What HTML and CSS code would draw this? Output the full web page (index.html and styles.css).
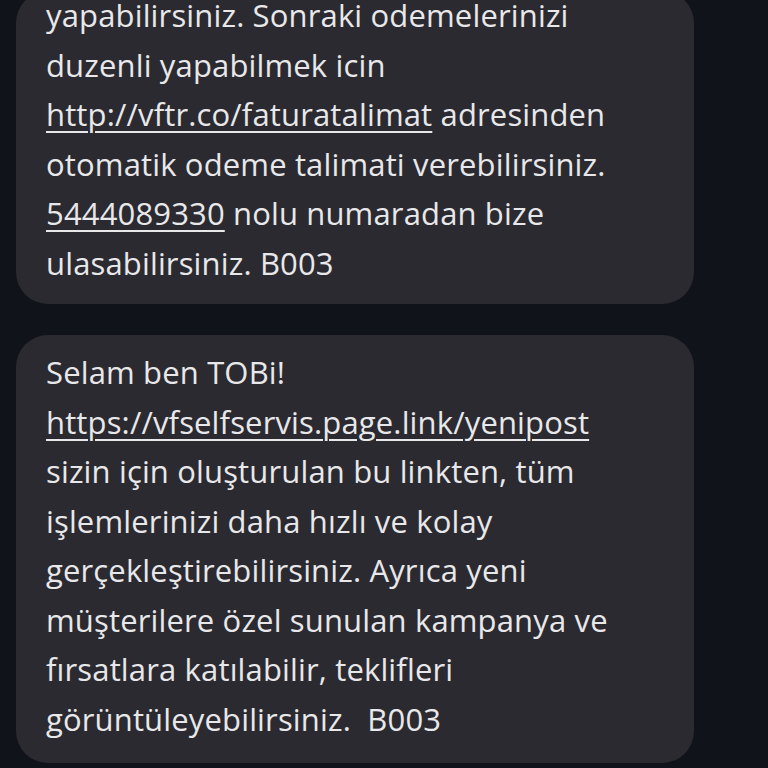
FILE: index.html
```html
<!DOCTYPE html>
<html lang="tr">
<head>
  <meta charset="UTF-8">
  <meta name="viewport" content="width=device-width, initial-scale=1.0">
  <title>Mesajlar</title>
  <link rel="stylesheet" href="styles.css">
</head>
<body>
  <main class="thread">
    <!-- ust kisimda kalan mesaj, ekranin disinda basliyor -->
    <div class="bubble bubble-cut">
      yapabilirsiniz. Sonraki odemelerinizi<br>
      duzenli yapabilmek icin<br>
      <a href="#">http://vftr.co/faturatalimat</a> adresinden<br>
      otomatik odeme talimati verebilirsiniz.<br>
      <a href="#">5444089330</a> nolu numaradan bize<br>
      ulasabilirsiniz. B003
    </div>

    <div class="bubble">
      Selam ben TOBi!<br>
      <a href="#">https://vfselfservis.page.link/yenipost</a><br>
      sizin için oluşturulan bu linkten, tüm<br>
      işlemlerinizi daha hızlı ve kolay<br>
      gerçekleştirebilirsiniz. Ayrıca yeni<br>
      müşterilere özel sunulan kampanya ve<br>
      fırsatlara katılabilir, teklifleri<br>
      görüntüleyebilirsiniz.&nbsp; B003
    </div>
  </main>
</body>
</html>
```

FILE: styles.css
```css
/* Genel */
body {
  margin: 0;
  background: #11131a;
  font-family: 'Open Sans', 'Noto Sans', sans-serif;
  color: #e8e8ea;
  overflow: hidden;
}

.thread {
  display: flex;
  flex-direction: column;
  gap: 31px;
  padding: 0 74px 0 16px;
}

/* Mesaj balonu */
.bubble {
  background: #2b2a30;
  border-radius: 32px;
  padding: 13px 30px 19px;
  font-size: 31px;
  line-height: 49.5px;
  letter-spacing: 0.15px;
  white-space: nowrap;
}

.bubble-cut {
  margin-top: -9px;
  padding-top: 0;
  padding-bottom: 16px;
}

.bubble a {
  color: inherit;
  text-decoration: underline;
  text-decoration-thickness: 2px;
  text-underline-offset: 5px;
}
```
